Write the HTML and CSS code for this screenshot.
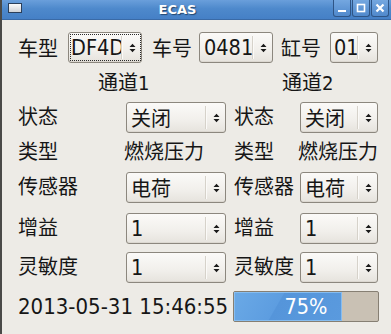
FILE: index.html
```html
<!DOCTYPE html>
<html>
<head>
  <title>ECAS</title>
  <meta charset="UTF-8">
  <link rel="stylesheet" href="styles.css">
</head>
<body>
  <div class="window">
    <div class="titlebar">
      <span class="win-icon"></span>
      <span class="title">ECAS</span>
      <div class="win-buttons">
        <span class="win-btn"><svg width="10" height="10" viewBox="0 0 10 10"><rect x="1" y="7" width="8" height="2" fill="#fff"/></svg></span>
        <span class="win-btn"><svg width="10" height="10" viewBox="0 0 10 10"><rect x="1.5" y="1.5" width="7" height="7" fill="none" stroke="#fff" stroke-width="1.6"/></svg></span>
        <span class="win-btn"><svg width="10" height="10" viewBox="0 0 10 10"><path d="M1.5 1.5 L8.5 8.5 M8.5 1.5 L1.5 8.5" stroke="#fff" stroke-width="2.2"/></svg></span>
      </div>
    </div>

    <div class="content">
      <div class="top-row">
        <span class="label">车型</span>
        <div class="combo combo-type focus">
          <span class="value latin">DF4D</span><span class="sep"></span>
          <span class="arrow"><svg width="7" height="10" viewBox="0 0 7 10"><path d="M0.5 4 L3.5 0.8 L6.5 4 Z M0.5 6 L3.5 9.2 L6.5 6 Z" fill="#1a1a1a"/></svg></span>
        </div>
        <span class="label lbl-num">车号</span>
        <div class="combo combo-num">
          <span class="value latin">0481</span><span class="sep"></span>
          <span class="arrow"><svg width="7" height="10" viewBox="0 0 7 10"><path d="M0.5 4 L3.5 0.8 L6.5 4 Z M0.5 6 L3.5 9.2 L6.5 6 Z" fill="#1a1a1a"/></svg></span>
        </div>
        <span class="label lbl-cyl">缸号</span>
        <div class="combo combo-cyl">
          <span class="value latin">01</span><span class="sep"></span>
          <span class="arrow"><svg width="7" height="10" viewBox="0 0 7 10"><path d="M0.5 4 L3.5 0.8 L6.5 4 Z M0.5 6 L3.5 9.2 L6.5 6 Z" fill="#1a1a1a"/></svg></span>
        </div>
      </div>

      <div class="channels">
        <span class="ch1">通道1</span><span class="ch2">通道2</span>
      </div>

      <div class="grid">
        <span class="label">状态</span>
        <div class="combo">
          <span class="value">关闭</span><span class="sep"></span>
          <span class="arrow"><svg width="7" height="10" viewBox="0 0 7 10"><path d="M0.5 4 L3.5 0.8 L6.5 4 Z M0.5 6 L3.5 9.2 L6.5 6 Z" fill="#1a1a1a"/></svg></span>
        </div>
        <span class="label right">状态</span>
        <div class="combo">
          <span class="value">关闭</span><span class="sep"></span>
          <span class="arrow"><svg width="7" height="10" viewBox="0 0 7 10"><path d="M0.5 4 L3.5 0.8 L6.5 4 Z M0.5 6 L3.5 9.2 L6.5 6 Z" fill="#1a1a1a"/></svg></span>
        </div>

        <span class="label">类型</span>
        <span class="label text-value">燃烧压力</span>
        <span class="label right">类型</span>
        <span class="label text-value">燃烧压力</span>

        <span class="label">传感器</span>
        <div class="combo">
          <span class="value">电荷</span><span class="sep"></span>
          <span class="arrow"><svg width="7" height="10" viewBox="0 0 7 10"><path d="M0.5 4 L3.5 0.8 L6.5 4 Z M0.5 6 L3.5 9.2 L6.5 6 Z" fill="#1a1a1a"/></svg></span>
        </div>
        <span class="label right">传感器</span>
        <div class="combo">
          <span class="value">电荷</span><span class="sep"></span>
          <span class="arrow"><svg width="7" height="10" viewBox="0 0 7 10"><path d="M0.5 4 L3.5 0.8 L6.5 4 Z M0.5 6 L3.5 9.2 L6.5 6 Z" fill="#1a1a1a"/></svg></span>
        </div>

        <span class="label">增益</span>
        <div class="combo">
          <span class="value latin">1</span><span class="sep"></span>
          <span class="arrow"><svg width="7" height="10" viewBox="0 0 7 10"><path d="M0.5 4 L3.5 0.8 L6.5 4 Z M0.5 6 L3.5 9.2 L6.5 6 Z" fill="#1a1a1a"/></svg></span>
        </div>
        <span class="label right">增益</span>
        <div class="combo">
          <span class="value latin">1</span><span class="sep"></span>
          <span class="arrow"><svg width="7" height="10" viewBox="0 0 7 10"><path d="M0.5 4 L3.5 0.8 L6.5 4 Z M0.5 6 L3.5 9.2 L6.5 6 Z" fill="#1a1a1a"/></svg></span>
        </div>

        <span class="label">灵敏度</span>
        <div class="combo">
          <span class="value latin">1</span><span class="sep"></span>
          <span class="arrow"><svg width="7" height="10" viewBox="0 0 7 10"><path d="M0.5 4 L3.5 0.8 L6.5 4 Z M0.5 6 L3.5 9.2 L6.5 6 Z" fill="#1a1a1a"/></svg></span>
        </div>
        <span class="label right">灵敏度</span>
        <div class="combo">
          <span class="value latin">1</span><span class="sep"></span>
          <span class="arrow"><svg width="7" height="10" viewBox="0 0 7 10"><path d="M0.5 4 L3.5 0.8 L6.5 4 Z M0.5 6 L3.5 9.2 L6.5 6 Z" fill="#1a1a1a"/></svg></span>
        </div>

        <span class="label latin datetime">2013-05-31 15:46:55</span>
        <div class="progress">
          <div class="bar" style="width: 75%;"></div>
          <span class="progress-text latin">75%</span>
        </div>
      </div>
    </div>
  </div>
</body>
</html>
```

FILE: styles.css
```css
body {
  margin: 0;
  padding: 0;
  font-family: "DejaVu Sans", "Noto Sans CJK SC", sans-serif;
  background-color: #edebe6;
}
.window {
  width: 391px;
  height: 334px;
  overflow: hidden;
  border-left: 2px solid #4a4a48;
  box-sizing: border-box;
  background: #edebe6;
}
.titlebar {
  height: 20px;
  display: flex;
  align-items: flex-start;
  padding-left: 6px;
  background: linear-gradient(#6a9fdb, #4e89cc 45%, #4580c6);
  border-bottom: 1px solid #3a6aa6;
  box-sizing: border-box;
}
.win-icon {
  width: 14px;
  height: 10px;
  margin-top: 3px;
  border: 1px solid #2b3f5a;
  box-sizing: border-box;
  background: linear-gradient(#fbfbfb, #cfd2d6);
}
.title {
  flex: 1;
  text-align: center;
  color: #ffffff;
  font-weight: bold;
  font-size: 13px;
  line-height: 19px;
  text-shadow: 1px 1px 1px #24476e;
}
.win-buttons {
  display: flex;
  gap: 1px;
  margin-right: 2px;
}
.win-btn {
  width: 18px;
  height: 17px;
  display: flex;
  align-items: center;
  justify-content: center;
  border: 1px solid #2f5586;
  border-top: none;
  border-radius: 0 0 3px 3px;
  box-sizing: border-box;
  background: linear-gradient(#74a7e0, #5089cc);
}
.content {
  padding: 12px 0 0 16px;
  color: #161616;
  font-family: "DejaVu Sans Condensed", "DejaVu Sans", "Noto Sans CJK SC", sans-serif;
  font-size: 20px;
}
.latin {
  font-family: "DejaVu Sans Condensed", "DejaVu Sans", sans-serif;
  font-stretch: condensed;
  font-size: 21.5px;
}
.label {
  white-space: nowrap;
}
.top-row {
  display: flex;
  align-items: center;
  height: 31px;
}
.top-row .label {
  width: 40px;
}
.combo {
  position: relative;
  display: flex;
  align-items: center;
  height: 31px;
  border: 1px solid #8c877e;
  border-radius: 3px;
  box-sizing: border-box;
  background: linear-gradient(#fbfaf8, #f1efeb 60%, #e6e3dd);
  box-shadow: inset 0 -1px 0 #dcd8d1;
}
.combo .value {
  flex: 1;
  padding-left: 4px;
  overflow: hidden;
  white-space: nowrap;
}
.combo .sep {
  width: 1px;
  height: 23px;
  background: #d6d2ca;
  border-right: 1px solid #fbfaf8;
}
.combo .arrow {
  width: 18px;
  display: flex;
  justify-content: center;
}
.combo-type {
  width: 74px;
  margin-left: 10px;
}
.combo-type .value {
  padding-left: 2px;
}
.focus::after {
  content: "";
  position: absolute;
  top: 1px;
  left: 1px;
  right: 0;
  bottom: 1px;
  border: 1px dotted #2a2a2a;
}
.lbl-num {
  margin-left: 10px;
}
.combo-num {
  width: 74px;
  margin-left: 7px;
}
.lbl-cyl {
  margin-left: 8px;
}
.combo-cyl {
  width: 48px;
  margin-left: 9px;
}
.combo-cyl .value {
  padding-left: 3px;
}
.channels {
  margin-top: 8px;
  height: 24px;
  line-height: 24px;
  padding-left: 80px;
}
.ch1 {
  display: inline-block;
  width: 184px;
}
.grid {
  display: grid;
  grid-template-columns: 108px 100px 74px 78px;
  grid-template-rows: 35px 35px 41px 39px 39px 31px;
  align-items: start;
  margin-top: 7px;
}
.grid .label {
  line-height: 31px;
}
.grid .right {
  padding-left: 8px;
}
.text-value {
  margin-left: -2px;
}
.grid .datetime {
  grid-column: 1 / 3;
  font-size: 22px;
}
.progress {
  grid-column: 3 / 5;
  position: relative;
  margin-left: 7px;
  margin-right: -1px;
  height: 31px;
  border: 1px solid #867f73;
  border-radius: 2px;
  box-sizing: border-box;
  background: #c9c1b4;
}
.bar {
  height: 100%;
  box-sizing: border-box;
  border: 1px solid #86bdf0;
  background: linear-gradient(120deg, #6aa9e6 0%, #5d9de0 40%, #5595da 41%, #5a9ade 100%);
}
.progress-text {
  position: absolute;
  left: 0;
  right: 0;
  top: 0;
  line-height: 29px;
  text-align: center;
  color: #ffffff;
}
```
